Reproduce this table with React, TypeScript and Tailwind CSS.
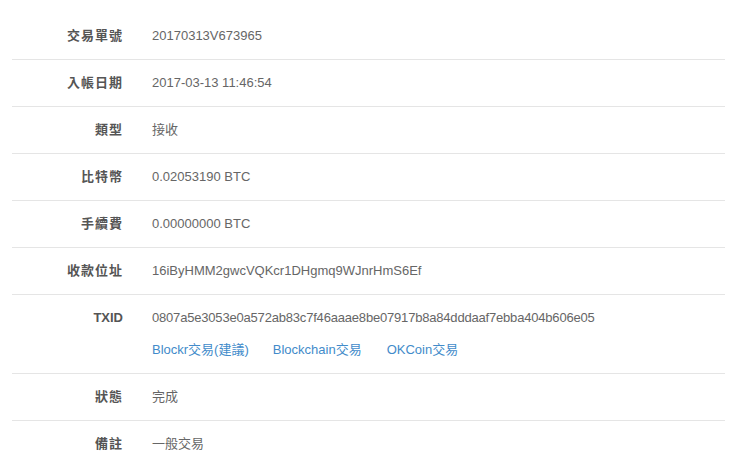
const rows: { label: string; value: React.ReactNode }[] = [
  { label: '交易單號', value: '20170313V673965' },
  { label: '入帳日期', value: '2017-03-13 11:46:54' },
  { label: '類型', value: '接收' },
  { label: '比特幣', value: '0.02053190 BTC' },
  { label: '手續費', value: '0.00000000 BTC' },
  { label: '收款位址', value: '16iByHMM2gwcVQKcr1DHgmq9WJnrHmS6Ef' },
  {
    label: 'TXID',
    value: (
      <div className="flex flex-col gap-[12px]">
        <span className="tracking-[-0.19px]">0807a5e3053e0a572ab83c7f46aaae8be07917b8a84dddaaf7ebba404b606e05</span>
        <div className="flex text-[#428bca]">
          <a className="mr-[24px]">Blockr交易(建議)</a>
          <a className="mr-[25px]">Blockchain交易</a>
          <a>OKCoin交易</a>
        </div>
      </div>
    ),
  },
  { label: '狀態', value: '完成' },
  { label: '備註', value: '一般交易' },
]

export default function App() {
  return (
    <div
      className="bg-white w-[737px] h-[474px] overflow-hidden pt-[13px] px-[12px] text-[13px] leading-[20px]"
      style={{ fontFamily: '"Liberation Sans", Arial, "Noto Sans CJK TC", sans-serif' }}
    >
      {rows.map((r, i) => (
        <div
          key={r.label}
          className={`flex py-[13px] ${i < rows.length - 1 ? 'border-b border-[#e5e5e5]' : ''}`}
        >
          <div className="w-[111px] shrink-0 text-right font-bold text-[#555]">
            <span className={r.label === 'TXID' ? '' : 'tracking-[1px]'}>{r.label}</span>
          </div>
          <div className="pl-[29px] text-[#666]">{r.value}</div>
        </div>
      ))}
    </div>
  )
}
